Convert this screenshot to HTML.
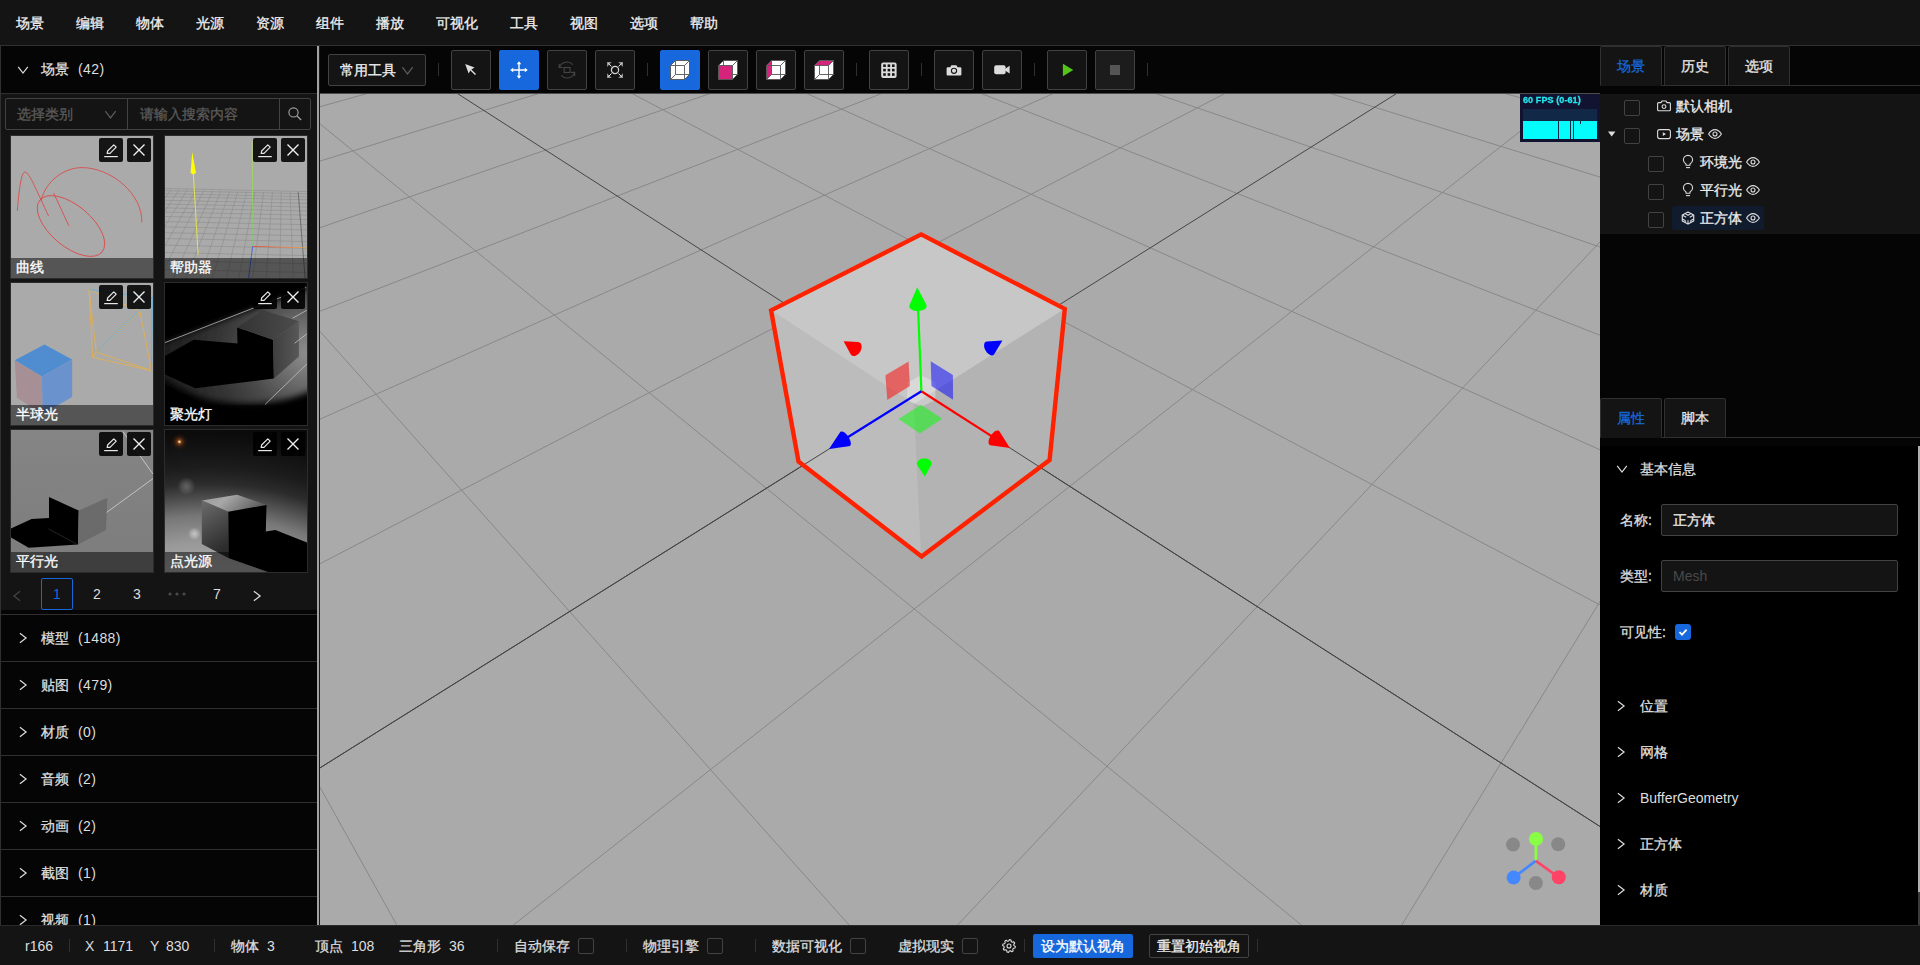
<!DOCTYPE html>
<html lang="zh"><head><meta charset="utf-8"><title>Editor</title><style>
*{box-sizing:border-box;margin:0;padding:0}
html,body{width:1920px;height:965px;overflow:hidden;background:#141414;font-family:"Liberation Sans",sans-serif;font-size:14px;color:#dcdcdc;line-height:1;-webkit-text-stroke-width:.3px}
div,span{position:absolute;white-space:nowrap}
svg{position:absolute;display:block;overflow:visible}
.t{line-height:20px;height:20px;font-size:14px;color:#dedede}
.mi{top:13px;line-height:20px;color:#f0f0f0}
.hb{left:1px;width:316px;height:46px;background:#050505;border-top:1px solid #303030}
.tb{top:50px;width:40px;height:40px;background:#141414;border:1px solid #424242;border-radius:2px}
.tb.on{background:#1668dc;border-color:#1668dc}
.sep{width:1px;background:#303030}
.th{width:142px;height:142px;overflow:hidden;background:#aaa;outline:1px solid #2c2c2c}
.th .lb{left:0;top:122px;width:142px;height:20px;background:rgba(0,0,0,.5)}
.th .lb b{position:absolute;left:5px;top:-1px;line-height:20px;font-size:14px;font-weight:normal;color:#fff}
.ib{top:2px;width:24px;height:24px;background:rgba(0,0,0,.88);border-radius:2px}
.pg{top:578px;width:32px;height:32px;line-height:32px;text-align:center;font-size:14px;color:#dedede}
.cb{width:16px;height:16px;border:1px solid #424242;border-radius:2px;background:#141414}
.tab{width:62px;height:40px;background:#141414;border:1px solid #303030;border-radius:2px 2px 0 0;text-align:center;line-height:38px;font-size:14px;color:#e6e6e6}
.tab.on{color:#1668dc;border-bottom-color:#141414}
.inp{left:1661px;width:237px;height:32px;background:#141414;border:1px solid #424242;border-radius:2px}
.inp span{left:11px;top:5px;line-height:20px}
.n{-webkit-text-stroke-width:0}
.st{top:936px;line-height:20px;font-size:14px;color:#dedede}
</style></head><body>
<div style="left:0;top:0;width:1920px;height:46px;background:#141414;border-bottom:1px solid #303030">
<span class="mi" style="left:16px">场景</span>
<span class="mi" style="left:76px">编辑</span>
<span class="mi" style="left:136px">物体</span>
<span class="mi" style="left:196px">光源</span>
<span class="mi" style="left:256px">资源</span>
<span class="mi" style="left:316px">组件</span>
<span class="mi" style="left:376px">播放</span>
<span class="mi" style="left:436px">可视化</span>
<span class="mi" style="left:510px">工具</span>
<span class="mi" style="left:570px">视图</span>
<span class="mi" style="left:630px">选项</span>
<span class="mi" style="left:690px">帮助</span>
</div>
<div style="left:0;top:46px;width:320px;height:879px;background:#050505;overflow:hidden">
<div style="left:0;top:0;width:1px;height:879px;background:#303030"></div>
<div style="left:317px;top:0;width:2px;height:879px;background:#a2a2a2"></div>
<div style="left:319px;top:0;width:1px;height:879px;background:#1a1a1a"></div>
<div class="hb" style="top:0;border-top:none"><svg style="left:16px;top:18px" width="12" height="12" viewBox="0 0 12 12"><path d="M1.2 2.9L6 9.1L10.8 2.9" fill="none" stroke="#dcdcdc" stroke-width="1.2"/></svg><span class="t" style="left:40px;top:13px">场景</span><span class="t n" style="left:77px;top:13px;letter-spacing:.4px">(42)</span></div>
<div style="left:1px;top:47px;width:316px;height:517px;background:#141414;border-top:1px solid #303030">
<div style="left:4px;top:4px;width:306px;height:32px;border:1px solid #424242;border-radius:2px;background:#141414">
<span style="left:11px;top:5px;line-height:20px;color:#5a5a5a">选择类别</span><svg style="left:98px;top:9px" width="13" height="13" viewBox="0 0 12 12"><path d="M1.2 2.9L6 9.1L10.8 2.9" fill="none" stroke="#5a5a5a" stroke-width="1.2"/></svg>
<div style="left:121px;top:0;width:1px;height:30px;background:#424242"></div>
<span style="left:134px;top:5px;line-height:20px;color:#5a5a5a">请输入搜索内容</span>
<div style="left:273px;top:0;width:1px;height:30px;background:#424242"></div>
<svg style="left:281px;top:7px" width="16" height="16" viewBox="0 0 16 16"><circle cx="6.5" cy="6.4" r="4.6" fill="none" stroke="#a0a0a0" stroke-width="1.15"/><path d="M9.8 9.8L14.2 14" stroke="#a0a0a0" stroke-width="1.3"/></svg>
</div>
<div class="th" style="left:10px;top:42px">
<svg style="left:0;top:0" width="142" height="142" viewBox="0 0 142 142"><rect width="142" height="142" fill="#aaa"/><g fill="none" stroke="#e23c3c" stroke-width="0.75"><path d="M6.3 74.9C7.6 60 9.6 36 14 36C18.4 36 26.5 57 37.6 80"/><path d="M30 64.8C35 44 54 31.6 71 31.6C100 31.6 132 58 130.8 86.6"/><ellipse cx="60" cy="90" rx="40.5" ry="20.5" transform="rotate(40 60 90)"/><path d="M42.6 57L57.8 89.6"/></g></svg>
<div class="lb" style="background:rgba(0,0,0,.5)"><b>曲线</b></div>
<div class="ib" style="left:88px;"><svg style="left:4px;top:4px" width="16" height="16" viewBox="0 0 16 16"><path d="M4.2 11.4L4.6 9L10.8 2.8L13.2 5.2L7 11.4Z" fill="none" stroke="#e8e8e8" stroke-width="1.2" stroke-linejoin="round"/><path d="M1.2 14.6H14.8" stroke="#e8e8e8" stroke-width="1.2"/></svg></div>
<div class="ib" style="left:116px;"><svg style="left:5px;top:5px" width="14" height="14" viewBox="0 0 14 14"><path d="M1.5 1.5L12.5 12.5M12.5 1.5L1.5 12.5" stroke="#f0f0f0" stroke-width="1.4"/></svg></div>
</div>
<div class="th" style="left:164px;top:42px">
<svg style="left:0;top:0" width="142" height="142" viewBox="0 0 142 142"><rect width="142" height="142" fill="#aaa"/><g stroke="#8a8a8a" stroke-width="0.55"><line x1="0" y1="52.5" x2="142" y2="55.6"/><line x1="0" y1="54.7" x2="142" y2="57.8"/><line x1="0" y1="57.7" x2="142" y2="60.8"/><line x1="0" y1="60.6" x2="142" y2="63.7"/><line x1="0" y1="64.3" x2="142" y2="67.4"/><line x1="0" y1="68.0" x2="142" y2="71.1"/><line x1="0" y1="71.9" x2="142" y2="75.0"/><line x1="0" y1="76.1" x2="142" y2="79.2"/><line x1="0" y1="80.5" x2="142" y2="83.6"/><line x1="0" y1="85.6" x2="142" y2="88.7"/><line x1="0" y1="90.8" x2="142" y2="93.9"/><line x1="0" y1="96.7" x2="142" y2="99.8"/><line x1="0" y1="102.5" x2="142" y2="105.6"/><line x1="0" y1="109.2" x2="142" y2="112.3"/><line x1="0" y1="116.5" x2="142" y2="119.6"/><line x1="0" y1="124.6" x2="142" y2="127.7"/><line x1="0" y1="133.4" x2="142" y2="136.5"/><line x1="0" y1="143.7" x2="142" y2="146.8"/><line x1="-35.3" y1="52.9" x2="-131.4" y2="150"/><line x1="-26.5" y1="53.1" x2="-116.8" y2="150"/><line x1="-18.4" y1="53.3" x2="-103.4" y2="150"/><line x1="-10.3" y1="53.5" x2="-90.1" y2="150"/><line x1="-2.2" y1="53.7" x2="-76.8" y2="150"/><line x1="5.9" y1="53.8" x2="-63.5" y2="150"/><line x1="14.0" y1="54.0" x2="-50.2" y2="150"/><line x1="22.1" y1="54.2" x2="-37.0" y2="150"/><line x1="30.9" y1="54.4" x2="-22.6" y2="150"/><line x1="39.0" y1="54.5" x2="-9.5" y2="150"/><line x1="47.8" y1="54.7" x2="4.8" y2="150"/><line x1="55.9" y1="54.9" x2="17.9" y2="150"/><line x1="64.7" y1="55.1" x2="32.2" y2="150"/><line x1="72.8" y1="55.3" x2="45.2" y2="150"/><line x1="81.7" y1="55.5" x2="59.4" y2="150"/><line x1="89.8" y1="55.6" x2="72.4" y2="150"/><line x1="98.6" y1="55.8" x2="86.5" y2="150"/><line x1="107.4" y1="56.0" x2="100.6" y2="150"/><line x1="116.2" y1="56.2" x2="114.6" y2="150"/><line x1="125.1" y1="56.4" x2="128.6" y2="150"/></g><line x1="133.2" y1="56.2" x2="140.1" y2="142.0" stroke="#5e5e5e" stroke-width="0.8" stroke-opacity="1"/><line x1="33.1" y1="118.5" x2="28.3" y2="36.8" stroke="#eaea4a" stroke-width="0.9" stroke-opacity="1"/><polygon points="27.2,15.9 25.6,37.1 28.3,38.6 31.0,37.1" fill="#ffff00"/><defs><linearGradient id="hg" x1="0" y1="0" x2="0" y2="1"><stop offset="0" stop-color="#c2d86a"/><stop offset="1" stop-color="#5ee044"/></linearGradient><linearGradient id="hr" x1="0" y1="0" x2="1" y2="0"><stop offset="0" stop-color="#f0402a"/><stop offset="1" stop-color="#f0a848"/></linearGradient></defs><path d="M86.7 4.4L87.7 110.4L88.5 110.4L87.5 4.4Z" fill="url(#hg)"/><path d="M87.6 110L142 111.4V112.2L87.6 110.8Z" fill="url(#hr)"/><line x1="87.6" y1="110.7" x2="83.6" y2="142.0" stroke="#3a62e0" stroke-width="0.9" stroke-opacity="1"/></svg>
<div class="lb" style="background:rgba(0,0,0,.5)"><b>帮助器</b></div>
<div class="ib" style="left:88px;"><svg style="left:4px;top:4px" width="16" height="16" viewBox="0 0 16 16"><path d="M4.2 11.4L4.6 9L10.8 2.8L13.2 5.2L7 11.4Z" fill="none" stroke="#e8e8e8" stroke-width="1.2" stroke-linejoin="round"/><path d="M1.2 14.6H14.8" stroke="#e8e8e8" stroke-width="1.2"/></svg></div>
<div class="ib" style="left:116px;"><svg style="left:5px;top:5px" width="14" height="14" viewBox="0 0 14 14"><path d="M1.5 1.5L12.5 12.5M12.5 1.5L1.5 12.5" stroke="#f0f0f0" stroke-width="1.4"/></svg></div>
</div>
<div class="th" style="left:10px;top:189px">
<svg style="left:0;top:0" width="142" height="142" viewBox="0 0 142 142"><rect width="142" height="142" fill="#aaa"/><polygon points="33.5,61.5 61.1,76.5 30.9,93.4 3.7,77.3" fill="#4f8dd0"/><polygon points="3.7,77.3 30.9,93.4 31.6,131.0 5.9,114.8" fill="#a79095"/><polygon points="30.9,93.4 61.1,76.5 61.1,114.0 31.6,131.0" fill="#6a93cd"/><line x1="78.0" y1="6.6" x2="81.7" y2="74.3" stroke="#eeb040" stroke-width="0.75" stroke-opacity="1"/><line x1="78.0" y1="6.6" x2="85.3" y2="69.2" stroke="#eeb040" stroke-width="0.75" stroke-opacity="1"/><line x1="78.0" y1="6.6" x2="128.8" y2="28.0" stroke="#eeb040" stroke-width="0.75" stroke-opacity="1"/><line x1="128.8" y1="28.0" x2="85.3" y2="69.2" stroke="#eeb040" stroke-width="0.75" stroke-opacity="1"/><line x1="128.8" y1="28.0" x2="140.5" y2="87.6" stroke="#eeb040" stroke-width="0.75" stroke-opacity="1"/><line x1="85.3" y1="69.2" x2="140.5" y2="87.6" stroke="#eeb040" stroke-width="0.75" stroke-opacity="1"/><line x1="81.7" y1="74.3" x2="140.5" y2="87.6" stroke="#eeb040" stroke-width="0.75" stroke-opacity="1"/><line x1="85.3" y1="69.2" x2="81.7" y2="74.3" stroke="#eeb040" stroke-width="0.75" stroke-opacity="1"/><line x1="78.0" y1="6.6" x2="141.3" y2="14.7" stroke="#52b2ea" stroke-width="0.75" stroke-opacity="1"/><line x1="141.3" y1="14.7" x2="85.3" y2="69.2" stroke="#52b2ea" stroke-width="0.75" stroke-opacity="1"/><line x1="141.3" y1="14.7" x2="140.5" y2="87.6" stroke="#52b2ea" stroke-width="0.75" stroke-opacity="1"/></svg>
<div class="lb" style="background:rgba(0,0,0,.5)"><b>半球光</b></div>
<div class="ib" style="left:88px;"><svg style="left:4px;top:4px" width="16" height="16" viewBox="0 0 16 16"><path d="M4.2 11.4L4.6 9L10.8 2.8L13.2 5.2L7 11.4Z" fill="none" stroke="#e8e8e8" stroke-width="1.2" stroke-linejoin="round"/><path d="M1.2 14.6H14.8" stroke="#e8e8e8" stroke-width="1.2"/></svg></div>
<div class="ib" style="left:116px;"><svg style="left:5px;top:5px" width="14" height="14" viewBox="0 0 14 14"><path d="M1.5 1.5L12.5 12.5M12.5 1.5L1.5 12.5" stroke="#f0f0f0" stroke-width="1.4"/></svg></div>
</div>
<div class="th" style="left:164px;top:189px">
<svg style="left:0;top:0" width="142" height="142" viewBox="0 0 142 142"><defs><radialGradient id="sg" gradientUnits="userSpaceOnUse" cx="141" cy="70" r="150"><stop offset="0" stop-color="#8e8e8e"/><stop offset="0.2" stop-color="#6c6c6c"/><stop offset="0.4" stop-color="#494949"/><stop offset="0.6" stop-color="#343434"/><stop offset="0.8" stop-color="#262626"/><stop offset="1" stop-color="#1a1a1a"/></radialGradient><filter id="sb" x="-10%" y="-10%" width="120%" height="120%"><feGaussianBlur stdDeviation="3"/></filter><linearGradient id="st" x1="0" y1="0" x2="1" y2="0"><stop offset="0" stop-color="#333"/><stop offset="1" stop-color="#4c4c4c"/></linearGradient><linearGradient id="sr" x1="0" y1="0" x2="1" y2="0"><stop offset="0" stop-color="#3e3e3e"/><stop offset="1" stop-color="#585858"/></linearGradient></defs><rect width="142" height="142" fill="#000"/><path d="M-6 61.5L91 25.5L150 3V106Q103 128 44 117Q15 108 -6 93Z" fill="url(#sg)" filter="url(#sb)"/><polygon points="0.0,73.1 28.7,56.7 72.5,60.6 72.1,44.4 108.2,56.7 108.9,95.6 30.2,105.2 0.0,91.5" fill="#000"/><polygon points="72.1,44.4 97.9,27.2 133.9,38.3 108.2,56.7" fill="url(#st)"/><polygon points="108.2,56.7 133.9,38.3 133.9,73.6 108.9,95.6" fill="url(#sr)"/><line x1="0.0" y1="59.6" x2="141.3" y2="4.4" stroke="#cfcfcf" stroke-width="0.7" stroke-opacity="1"/><line x1="127.3" y1="35.3" x2="142.0" y2="27.2" stroke="#cfcfcf" stroke-width="0.7" stroke-opacity="1"/><line x1="129.5" y1="60.3" x2="142.0" y2="50.8" stroke="#cfcfcf" stroke-width="0.7" stroke-opacity="1"/><line x1="100.1" y1="121.4" x2="142.0" y2="80.9" stroke="#cfcfcf" stroke-width="0.7" stroke-opacity="1"/></svg>
<div class="lb" style="background:rgba(0,0,0,.5)"><b>聚光灯</b></div>
<div class="ib" style="left:88px;"><svg style="left:4px;top:4px" width="16" height="16" viewBox="0 0 16 16"><path d="M4.2 11.4L4.6 9L10.8 2.8L13.2 5.2L7 11.4Z" fill="none" stroke="#e8e8e8" stroke-width="1.2" stroke-linejoin="round"/><path d="M1.2 14.6H14.8" stroke="#e8e8e8" stroke-width="1.2"/></svg></div>
<div class="ib" style="left:116px;"><svg style="left:5px;top:5px" width="14" height="14" viewBox="0 0 14 14"><path d="M1.5 1.5L12.5 12.5M12.5 1.5L1.5 12.5" stroke="#f0f0f0" stroke-width="1.4"/></svg></div>
</div>
<div class="th" style="left:10px;top:336px">
<svg style="left:0;top:0" width="142" height="142" viewBox="0 0 142 142"><defs><linearGradient id="dg" x1="0" y1="0" x2="0" y2="1"><stop offset="0" stop-color="#858585"/><stop offset="1" stop-color="#7c7c7c"/></linearGradient></defs><rect width="142" height="142" fill="url(#dg)"/><polygon points="38.0,67.0 66.2,52.2 96.4,67.7 67.7,80.6" fill="#828282"/><polygon points="38.0,67.0 67.7,80.6 67.0,114.5 17.7,117.7 0.0,107.4 0.0,98.6 20.6,89.0 38.0,88.0" fill="#000"/><polygon points="67.7,80.6 96.4,67.7 94.9,100.1 67.0,114.5" fill="#6b6b6b"/><line x1="37.5" y1="98.9" x2="65.5" y2="114.0" stroke="#3a3a3a" stroke-width="0.6" stroke-opacity="1"/><line x1="95.6" y1="82.4" x2="142.0" y2="48.6" stroke="#e0e0e0" stroke-width="0.7" stroke-opacity="1"/><line x1="111.8" y1="1.5" x2="142.0" y2="44.1" stroke="#e0e0e0" stroke-width="0.7" stroke-opacity="1"/></svg>
<div class="lb" style="background:rgba(0,0,0,.5)"><b>平行光</b></div>
<div class="ib" style="left:88px;"><svg style="left:4px;top:4px" width="16" height="16" viewBox="0 0 16 16"><path d="M4.2 11.4L4.6 9L10.8 2.8L13.2 5.2L7 11.4Z" fill="none" stroke="#e8e8e8" stroke-width="1.2" stroke-linejoin="round"/><path d="M1.2 14.6H14.8" stroke="#e8e8e8" stroke-width="1.2"/></svg></div>
<div class="ib" style="left:116px;"><svg style="left:5px;top:5px" width="14" height="14" viewBox="0 0 14 14"><path d="M1.5 1.5L12.5 12.5M12.5 1.5L1.5 12.5" stroke="#f0f0f0" stroke-width="1.4"/></svg></div>
</div>
<div class="th" style="left:164px;top:336px">
<svg style="left:0;top:0" width="142" height="142" viewBox="0 0 142 142"><defs><radialGradient id="pg" cx="0.3" cy="2.5" r="2.6"><stop offset="0.6" stop-color="#a6a6a6"/><stop offset="0.656" stop-color="#999"/><stop offset="0.729" stop-color="#777"/><stop offset="0.768" stop-color="#555"/><stop offset="0.816" stop-color="#2c2c2c"/><stop offset="0.86" stop-color="#1c1c1c"/><stop offset="0.95" stop-color="#0c0c0c"/><stop offset="1" stop-color="#080808"/></radialGradient><radialGradient id="pf"><stop offset="0" stop-color="#fff0d4"/><stop offset="0.1" stop-color="#f4b878"/><stop offset="0.22" stop-color="#8a4a22" stop-opacity="0.85"/><stop offset="0.6" stop-color="#44220e" stop-opacity="0.5"/><stop offset="1" stop-color="#301400" stop-opacity="0"/></radialGradient><radialGradient id="pw"><stop offset="0" stop-color="#fff" stop-opacity="0.55"/><stop offset="0.5" stop-color="#fff" stop-opacity="0.3"/><stop offset="1" stop-color="#fff" stop-opacity="0"/></radialGradient><linearGradient id="pt" x1="0" y1="0" x2="1" y2="0.3"><stop offset="0" stop-color="#9a9a9a"/><stop offset="0.4" stop-color="#a8a8a8"/><stop offset="1" stop-color="#606060"/></linearGradient><linearGradient id="pl" x1="0" y1="0" x2="0.3" y2="1"><stop offset="0" stop-color="#6c6c6c"/><stop offset="1" stop-color="#2c2c2c"/></linearGradient></defs><rect width="142" height="142" fill="url(#pg)"/><circle cx="14.4" cy="11.8" r="8.5" fill="url(#pf)"/><circle cx="21.3" cy="56" r="9" fill="url(#pw)" opacity="0.45"/><circle cx="29.4" cy="103.7" r="6.5" fill="url(#pw)" opacity="0.9"/><polygon points="36.8,70.6 72.1,64.7 101.5,75.0 63.3,81.7" fill="url(#pt)"/><polygon points="36.8,70.6 63.3,81.7 63.3,128.0 36.8,114.0" fill="url(#pl)"/><polygon points="63.3,81.7 101.5,75.0 100.8,101.5 110.4,100.1 142.0,112.6 142.0,142.0 103.0,142.0 63.3,128.0" fill="#000"/></svg>
<div class="lb" style="background:rgba(0,0,0,.5)"><b>点光源</b></div>
<div class="ib" style="left:88px;"><svg style="left:4px;top:4px" width="16" height="16" viewBox="0 0 16 16"><path d="M4.2 11.4L4.6 9L10.8 2.8L13.2 5.2L7 11.4Z" fill="none" stroke="#e8e8e8" stroke-width="1.2" stroke-linejoin="round"/><path d="M1.2 14.6H14.8" stroke="#e8e8e8" stroke-width="1.2"/></svg></div>
<div class="ib" style="left:116px;"><svg style="left:5px;top:5px" width="14" height="14" viewBox="0 0 14 14"><path d="M1.5 1.5L12.5 12.5M12.5 1.5L1.5 12.5" stroke="#f0f0f0" stroke-width="1.4"/></svg></div>
</div>
</div>
<svg style="left:11px;top:544px" width="12" height="12" viewBox="0 0 12 12"><path d="M9.1 1.2L2.9 6L9.1 10.8" fill="none" stroke="#434343" stroke-width="1.3"/></svg>
<div class="pg n" style="left:41px;top:532px;border:1px solid #1668dc;border-radius:2px;color:#1668dc;line-height:30px;background:#141414">1</div>
<div class="pg n" style="left:81px;top:532px">2</div>
<div class="pg n" style="left:121px;top:532px">3</div>
<div class="pg n" style="left:201px;top:532px">7</div>
<svg style="left:167px;top:546px" width="20" height="4"><circle cx="3" cy="2" r="1.6" fill="#4a4a4a"/><circle cx="10" cy="2" r="1.6" fill="#4a4a4a"/><circle cx="17" cy="2" r="1.6" fill="#4a4a4a"/></svg>
<svg style="left:251px;top:544px" width="12" height="12" viewBox="0 0 12 12"><path d="M2.9 1.2L9.1 6L2.9 10.8" fill="none" stroke="#dcdcdc" stroke-width="1.3"/></svg>
<div class="hb" style="top:568px;height:47px"><svg style="left:16px;top:17px" width="12" height="12" viewBox="0 0 12 12"><path d="M2.9 1.2L9.1 6L2.9 10.8" fill="none" stroke="#dcdcdc" stroke-width="1.2"/></svg><span class="t" style="left:40px;top:13px">模型</span><span class="t n" style="left:77px;top:13px;letter-spacing:.4px">(1488)</span></div>
<div class="hb" style="top:615px;height:47px"><svg style="left:16px;top:17px" width="12" height="12" viewBox="0 0 12 12"><path d="M2.9 1.2L9.1 6L2.9 10.8" fill="none" stroke="#dcdcdc" stroke-width="1.2"/></svg><span class="t" style="left:40px;top:13px">贴图</span><span class="t n" style="left:77px;top:13px;letter-spacing:.4px">(479)</span></div>
<div class="hb" style="top:662px;height:47px"><svg style="left:16px;top:17px" width="12" height="12" viewBox="0 0 12 12"><path d="M2.9 1.2L9.1 6L2.9 10.8" fill="none" stroke="#dcdcdc" stroke-width="1.2"/></svg><span class="t" style="left:40px;top:13px">材质</span><span class="t n" style="left:77px;top:13px;letter-spacing:.4px">(0)</span></div>
<div class="hb" style="top:709px;height:47px"><svg style="left:16px;top:17px" width="12" height="12" viewBox="0 0 12 12"><path d="M2.9 1.2L9.1 6L2.9 10.8" fill="none" stroke="#dcdcdc" stroke-width="1.2"/></svg><span class="t" style="left:40px;top:13px">音频</span><span class="t n" style="left:77px;top:13px;letter-spacing:.4px">(2)</span></div>
<div class="hb" style="top:756px;height:47px"><svg style="left:16px;top:17px" width="12" height="12" viewBox="0 0 12 12"><path d="M2.9 1.2L9.1 6L2.9 10.8" fill="none" stroke="#dcdcdc" stroke-width="1.2"/></svg><span class="t" style="left:40px;top:13px">动画</span><span class="t n" style="left:77px;top:13px;letter-spacing:.4px">(2)</span></div>
<div class="hb" style="top:803px;height:47px"><svg style="left:16px;top:17px" width="12" height="12" viewBox="0 0 12 12"><path d="M2.9 1.2L9.1 6L2.9 10.8" fill="none" stroke="#dcdcdc" stroke-width="1.2"/></svg><span class="t" style="left:40px;top:13px">截图</span><span class="t n" style="left:77px;top:13px;letter-spacing:.4px">(1)</span></div>
<div class="hb" style="top:850px;height:47px"><svg style="left:16px;top:17px" width="12" height="12" viewBox="0 0 12 12"><path d="M2.9 1.2L9.1 6L2.9 10.8" fill="none" stroke="#dcdcdc" stroke-width="1.2"/></svg><span class="t" style="left:40px;top:13px">视频</span><span class="t n" style="left:77px;top:13px;letter-spacing:.4px">(1)</span></div>
</div>
<div style="left:320px;top:46px;width:1280px;height:48px;background:#050505;border-bottom:1px solid #4c4c4c"></div>
<div style="left:328px;top:54px;width:98px;height:32px;background:#141414;border:1px solid #424242;border-radius:2px"><span style="left:11px;top:5px;line-height:20px;color:#f0f0f0">常用工具</span><svg style="left:72px;top:9px" width="13" height="13" viewBox="0 0 12 12"><path d="M1.2 2.9L6 9.1L10.8 2.9" fill="none" stroke="#5a5a5a" stroke-width="1.2"/></svg></div>
<div class="sep" style="left:438px;top:63px;height:13px"></div>
<div class="sep" style="left:647px;top:63px;height:13px"></div>
<div class="sep" style="left:856px;top:63px;height:13px"></div>
<div class="sep" style="left:921px;top:63px;height:13px"></div>
<div class="sep" style="left:1034px;top:63px;height:13px"></div>
<div class="sep" style="left:1147px;top:63px;height:13px"></div>
<div class="tb " style="left:451px"><svg style="left:11px;top:11px" width="16" height="16" viewBox="0 0 16 16"><path d="M2.2 2L11.6 5.6L8.4 7.4L13 12L12 13L7.4 8.4L5.6 11.6Z" fill="#dcdcdc"/></svg></div>
<div class="tb on" style="left:499px"><svg style="left:9px;top:9px" width="20" height="20" viewBox="0 0 20 20"><path d="M10 1.2L12.3 4.2H10.7V9.3H15.8V7.7L18.8 10L15.8 12.3V10.7H10.7V15.8H12.3L10 18.8L7.7 15.8H9.3V10.7H4.2V12.3L1.2 10L4.2 7.7V9.3H9.3V4.2H7.7Z" fill="#fff"/></svg></div>
<div class="tb " style="left:547px"><svg style="left:10px;top:10px" width="18" height="18" viewBox="0 0 18 18"><rect x="6.1" y="6.5" width="5.9" height="5" fill="none" stroke="#454545" stroke-width="1.1"/><path d="M1.3 6.5A7.9 7.9 0 0 1 14.7 3.6" fill="none" stroke="#454545" stroke-width="1.1"/><path d="M1.2 3V6.5H4.7" fill="none" stroke="#454545" stroke-width="1.1"/><path d="M16.7 11.4A7.9 7.9 0 0 1 3.2 14.3" fill="none" stroke="#454545" stroke-width="1.1"/><path d="M13.2 11.4H16.7V14.9" fill="none" stroke="#454545" stroke-width="1.1"/></svg></div>
<div class="tb " style="left:595px"><svg style="left:10px;top:10px" width="18" height="18" viewBox="0 0 18 18"><circle cx="9" cy="9" r="3.6" fill="none" stroke="#d4d4d4" stroke-width="1.25"/><path d="M1 1.1H5.8L1 5.9ZM17 1.1V5.9L12.2 1.1ZM1 17V12.2L5.8 17ZM17 17H12.2L17 12.2Z" fill="#8e8e8e"/><path d="M2.2 2.3L5.5 5.6M15.8 2.3L12.5 5.6M2.2 15.8L5.5 12.5M15.8 15.8L12.5 12.5" stroke="#f0f0f0" stroke-width="1"/></svg></div>
<div class="tb on" style="left:660px"><svg style="left:9px;top:9px" width="20" height="20" viewBox="0 0 20 20"><path d="M0.5 5.5L5.5 0.5H19.5V14.5L14.5 19.5H0.5Z" fill="#fff"/><path d="M0.5 5.5H14.5V19.5H0.5ZM0.5 5.5L5.5 0.5H19.5V14.5L14.5 19.5M14.5 5.5L19.5 0.5M5.5 0.5V14.5H19.5M5.5 14.5L0.5 19.5" fill="none" stroke="#555" stroke-width="0.9"/></svg></div>
<div class="tb " style="left:708px"><svg style="left:9px;top:9px" width="20" height="20" viewBox="0 0 20 20"><path d="M0.5 5.5L5.5 0.5H19.5V14.5L14.5 19.5H0.5Z" fill="#fff"/><rect x="0.5" y="5.5" width="14" height="14" fill="#d6247c"/><path d="M0.5 5.5H14.5V19.5H0.5ZM0.5 5.5L5.5 0.5H19.5V14.5L14.5 19.5M14.5 5.5L19.5 0.5M5.5 0.5V5.5M14.5 14.5H19.5" fill="none" stroke="#555" stroke-width="0.9"/></svg></div>
<div class="tb " style="left:756px"><svg style="left:9px;top:9px" width="20" height="20" viewBox="0 0 20 20"><path d="M0.5 5.5L5.5 0.5H19.5V14.5L14.5 19.5H0.5Z" fill="#fff"/><path d="M0.5 5.5L5.5 0.5V14.5L0.5 19.5Z" fill="#d6247c"/><path d="M0.5 5.5H14.5V19.5H0.5ZM0.5 5.5L5.5 0.5H19.5V14.5L14.5 19.5M14.5 5.5L19.5 0.5M5.5 0.5V14.5H19.5M5.5 14.5L0.5 19.5" fill="none" stroke="#555" stroke-width="0.9"/></svg></div>
<div class="tb " style="left:804px"><svg style="left:9px;top:9px" width="20" height="20" viewBox="0 0 20 20"><path d="M0.5 5.5L5.5 0.5H19.5V14.5L14.5 19.5H0.5Z" fill="#fff"/><path d="M0.5 5.5L5.5 0.5H19.5L14.5 5.5Z" fill="#d6247c"/><path d="M0.5 5.5H14.5V19.5H0.5ZM0.5 5.5L5.5 0.5H19.5V14.5L14.5 19.5M14.5 5.5L19.5 0.5M5.5 0.5V14.5H19.5M5.5 14.5L0.5 19.5" fill="none" stroke="#555" stroke-width="0.9"/></svg></div>
<div class="tb " style="left:869px"><svg style="left:11px;top:11px" width="16" height="16" viewBox="0 0 16 16"><rect x="0.2" y="0.4" width="15.4" height="15.6" rx="2" fill="#dcdcdc"/><rect x="2.2" y="2.4" width="2.6" height="2.6" fill="#141414"/><rect x="2.2" y="6.800000000000001" width="2.6" height="2.6" fill="#141414"/><rect x="2.2" y="11.200000000000001" width="2.6" height="2.6" fill="#141414"/><rect x="6.6000000000000005" y="2.4" width="2.6" height="2.6" fill="#141414"/><rect x="6.6000000000000005" y="6.800000000000001" width="2.6" height="2.6" fill="#141414"/><rect x="6.6000000000000005" y="11.200000000000001" width="2.6" height="2.6" fill="#141414"/><rect x="11.0" y="2.4" width="2.6" height="2.6" fill="#141414"/><rect x="11.0" y="6.800000000000001" width="2.6" height="2.6" fill="#141414"/><rect x="11.0" y="11.200000000000001" width="2.6" height="2.6" fill="#141414"/></svg></div>
<div class="tb " style="left:934px"><svg style="left:11px;top:13px" width="16" height="12" viewBox="0 0 16 12"><path d="M1.6 3.2H4.2L5.4 1.2H10.4L11.6 3.2H14.2Q15.4 3.2 15.4 4.4V10.2Q15.4 11.4 14.2 11.4H1.6Q0.6 11.4 0.6 10.2V4.4Q0.6 3.2 1.6 3.2Z" fill="#dcdcdc"/><circle cx="8" cy="6.8" r="2.6" fill="#dcdcdc" stroke="#141414" stroke-width="1.1"/></svg></div>
<div class="tb " style="left:982px"><svg style="left:11px;top:14px" width="16" height="10" viewBox="0 0 16 10"><rect x="0.2" y="0.2" width="11.4" height="9" rx="2" fill="#dcdcdc"/><path d="M11 4L15.6 0.8V8.6L11 5.6Z" fill="#dcdcdc"/></svg></div>
<div class="tb " style="left:1047px"><svg style="left:13px;top:12px" width="14" height="14" viewBox="0 0 14 14"><path d="M1.9 0.7L12.3 7L1.9 13.3Z" fill="#52c41a"/></svg></div>
<div class="tb dis" style="left:1095px;background:#1c1c1c"><svg style="left:14px;top:14px" width="10" height="10" viewBox="0 0 10 10"><rect width="10" height="10" fill="#555"/></svg></div>
<div style="left:320px;top:94px;width:1280px;height:831px;background:#aaaaaa;overflow:hidden">
<svg style="left:0;top:0" width="1280" height="831" viewBox="320 94 1280 831">
<g stroke-linecap="butt">
<line x1="939.0" y1="-145.4" x2="-422.8" y2="153.9" stroke="#888" stroke-width="1"/>
<line x1="939.0" y1="-145.4" x2="2256.1" y2="143.4" stroke="#888" stroke-width="1"/>
<line x1="987.4" y1="-134.8" x2="-427.9" y2="200.5" stroke="#888" stroke-width="1"/>
<line x1="889.8" y1="-134.6" x2="2258.1" y2="189.1" stroke="#888" stroke-width="1"/>
<line x1="1039.6" y1="-123.3" x2="-434.0" y2="255.1" stroke="#888" stroke-width="1"/>
<line x1="836.8" y1="-122.9" x2="2260.4" y2="242.7" stroke="#888" stroke-width="1"/>
<line x1="1096.0" y1="-110.9" x2="-441.2" y2="320.2" stroke="#888" stroke-width="1"/>
<line x1="779.3" y1="-110.3" x2="2263.2" y2="306.4" stroke="#888" stroke-width="1"/>
<line x1="1157.1" y1="-97.5" x2="-449.9" y2="398.9" stroke="#888" stroke-width="1"/>
<line x1="717.0" y1="-96.6" x2="2266.5" y2="383.6" stroke="#888" stroke-width="1"/>
<line x1="1223.6" y1="-83.0" x2="-460.6" y2="496.0" stroke="#888" stroke-width="1"/>
<line x1="649.1" y1="-81.6" x2="2270.7" y2="478.8" stroke="#888" stroke-width="1"/>
<line x1="1296.2" y1="-67.1" x2="-474.2" y2="619.0" stroke="#888" stroke-width="1"/>
<line x1="574.7" y1="-65.3" x2="2275.9" y2="599.2" stroke="#888" stroke-width="1"/>
<line x1="1375.8" y1="-49.6" x2="-491.9" y2="779.6" stroke="#888" stroke-width="1"/>
<line x1="493.1" y1="-47.4" x2="2282.8" y2="756.5" stroke="#888" stroke-width="1"/>
<line x1="1463.4" y1="-30.4" x2="-516.1" y2="998.2" stroke="#888" stroke-width="1"/>
<line x1="402.9" y1="-27.6" x2="2292.1" y2="970.6" stroke="#888" stroke-width="1"/>
<line x1="1668.2" y1="14.5" x2="-605.5" y2="1807.2" stroke="#888" stroke-width="1"/>
<line x1="191.4" y1="18.9" x2="2326.5" y2="1761.8" stroke="#888" stroke-width="1"/>
<line x1="1788.9" y1="41.0" x2="-703.2" y2="2691.3" stroke="#888" stroke-width="1"/>
<line x1="66.1" y1="46.5" x2="2364.0" y2="2624.9" stroke="#888" stroke-width="1"/>
<line x1="1924.9" y1="70.8" x2="-928.7" y2="4730.7" stroke="#888" stroke-width="1"/>
<line x1="-75.5" y1="77.6" x2="2450.2" y2="4609.7" stroke="#888" stroke-width="1"/>
<line x1="2079.3" y1="104.6" x2="-1637.2" y2="13171.3" stroke="#888" stroke-width="1"/>
<line x1="-237.0" y1="113.1" x2="2681.3" y2="13175.5" stroke="#888" stroke-width="1"/>
<line x1="2256.1" y1="143.4" x2="2822.6" y2="13175.7" stroke="#888" stroke-width="1"/>
<line x1="-422.8" y1="153.9" x2="-1861.5" y2="13171.1" stroke="#888" stroke-width="1"/>
<line x1="1560.4" y1="-9.1" x2="-550.9" y2="1313.4" stroke="#454545" stroke-width="1"/>
<line x1="302.9" y1="-5.6" x2="2305.5" y2="1279.1" stroke="#454545" stroke-width="1"/>
</g>
<polygon points="921.2,233.9 1065.3,308.7 914.2,404.3 770.6,310.2" fill="#c7c7c7" stroke="#c7c7c7" stroke-width="0.6"/>
<polygon points="770.6,310.2 914.2,404.3 921.6,557.0 798.1,461.8" fill="#bcbcbc" stroke="#bcbcbc" stroke-width="0.6"/>
<polygon points="1065.3,308.7 914.2,404.3 921.6,557.0 1050.0,460.3" fill="#b3b3b3" stroke="#b3b3b3" stroke-width="0.6"/>
<line x1="991.5" y1="436.1" x2="2305.5" y2="1279.1" stroke="#454545" stroke-width="1"/>
<line x1="848.2" y1="437.0" x2="-550.9" y2="1313.4" stroke="#454545" stroke-width="1"/>
<polygon points="921.2,234.4 1064.8,308.9 1049.6,460.0 921.6,556.4 798.5,461.5 771.1,310.4" fill="none" stroke="#ff2200" stroke-width="4.4" stroke-linejoin="miter"/>
<polygon points="906.8,400.3 907.7,382.4 920.7,375.3 935.6,382.2 935.3,400.1 922.0,406.5" fill="#fff" fill-opacity="0.3"/>
<polygon points="909.9,386.1 908.6,361.4 885.4,375.3 887.3,400.0" fill="#ff0000" fill-opacity="0.5"/>
<polygon points="931.5,386.0 953.1,399.7 952.9,374.9 930.7,361.3" fill="#0000ff" fill-opacity="0.5"/>
<polygon points="920.9,404.8 942.3,418.7 920.0,433.4 898.6,419.0" fill="#00ff00" fill-opacity="0.5"/>
<line x1="921.4" y1="391.2" x2="994.3" y2="437.9" stroke="#ff0000" stroke-width="2.2"/>
<line x1="921.4" y1="391.2" x2="918.0" y2="306.1" stroke="#00ff00" stroke-width="2.2"/>
<line x1="921.4" y1="391.2" x2="845.3" y2="438.8" stroke="#0000ff" stroke-width="2.2"/>
<polygon points="988.5,442.0 988.8,440.2 989.4,438.3 990.4,436.3 991.6,434.5 993.0,432.9 994.5,431.6 996.0,430.8 997.4,430.4 998.5,430.6 999.4,431.3 1009.9,447.9 990.1,445.2 989.2,444.6 988.7,443.5" fill="#ff0000"/>
<polygon points="843.6,341.3 858.2,342.1 859.5,342.5 860.5,343.2 861.2,344.4 861.6,345.9 861.6,347.6 861.1,349.4 860.4,351.2 859.3,352.9 858.0,354.2 856.5,355.3 855.0,355.9 853.6,356.1 852.3,355.8 851.2,355.1 850.5,353.9" fill="#ff0000"/>
<polygon points="909.3,306.1 909.7,304.8 917.2,287.2 926.4,304.8 926.6,306.0 926.3,307.3 925.4,308.5 924.0,309.5 922.2,310.3 920.0,310.8 917.8,311.0 915.5,310.9 913.4,310.4 911.7,309.6 910.3,308.6 909.5,307.4" fill="#00ff00"/>
<polygon points="916.9,463.5 917.2,462.2 918.0,461.0 919.2,459.9 920.7,459.1 922.5,458.6 924.4,458.4 926.3,458.6 928.0,459.1 929.5,459.9 930.7,460.9 931.4,462.1 931.6,463.4 931.4,464.7 924.8,476.6 917.8,466.1 917.1,464.8" fill="#00ff00"/>
<polygon points="829.0,449.0 840.1,432.3 840.8,431.6 841.8,431.4 843.1,431.7 844.5,432.5 845.9,433.7 847.3,435.3 848.6,437.2 849.6,439.1 850.4,441.1 850.8,442.8 850.8,444.3 850.4,445.4 849.7,446.1 848.7,446.2" fill="#0000ff"/>
<polygon points="984.1,345.3 984.3,343.8 984.9,342.6 985.8,341.8 987.0,341.5 1002.4,340.4 994.2,354.3 993.3,355.1 992.1,355.4 990.8,355.2 989.4,354.6 988.0,353.6 986.7,352.2 985.6,350.6 984.7,348.8 984.2,347.0" fill="#0000ff"/>
<g stroke-width="2.7" stroke-linecap="butt"><line x1="1535.8" y1="860.8" x2="1536" y2="843" stroke="#88ff44"/><line x1="1535.8" y1="860.8" x2="1554" y2="874" stroke="#ff4466"/><line x1="1535.8" y1="860.8" x2="1518" y2="874.3" stroke="#4488ff"/></g>
<circle cx="1513" cy="844.6" r="7" fill="#888"/>
<circle cx="1558.2" cy="844.2" r="7" fill="#888"/>
<circle cx="1535.9" cy="883" r="7" fill="#888"/>
<circle cx="1536" cy="838.9" r="7" fill="#88ff44"/>
<circle cx="1513.6" cy="877.6" r="7" fill="#4488ff"/>
<circle cx="1558.8" cy="877.2" r="7" fill="#ff4466"/>
</svg>
<div style="left:1200px;top:0;width:80px;height:48px;background:#0e0e2e;opacity:.97">
<span style="left:3px;top:1px;font-size:9px;font-weight:bold;line-height:11px;color:#1fe8f0;letter-spacing:0.1px">60 FPS (0-61)</span>
<div style="left:3px;top:15px;width:74px;height:30px;background:#0ff"></div>
<div style="left:3px;top:15px;width:74px;height:12px;background:#0e2444"></div>
<div style="left:38px;top:27px;width:1px;height:18px;background:#0e2444"></div>
<div style="left:50px;top:27px;width:1px;height:18px;background:#0e2444"></div>
<div style="left:53px;top:27px;width:1px;height:18px;background:#0e2444"></div>
<div style="left:60px;top:27px;width:1px;height:3px;background:#0e2444"></div>
</div>
</div>
<div style="left:1600px;top:46px;width:320px;height:879px;background:#050505"></div>
<div style="left:1600px;top:85px;width:320px;height:1px;background:#303030"></div>
<div class="tab on" style="left:1600px;top:46px">场景</div>
<div class="tab " style="left:1664px;top:46px">历史</div>
<div class="tab " style="left:1728px;top:46px">选项</div>
<div style="left:1600px;top:94px;width:320px;height:140px;background:#141414"></div>
<div class="cb" style="left:1624px;top:100px"></div>
<div style="left:1648px;top:94px;width:88px;height:24px;border-radius:3px">
<svg style="left:9px;top:5px" width="14" height="14" viewBox="0 0 14 14"><path d="M1.6 3.6H4L5 2H9L10 3.6H12.4Q13.4 3.6 13.4 4.6V10.8Q13.4 11.8 12.4 11.8H1.6Q0.6 11.8 0.6 10.8V4.6Q0.6 3.6 1.6 3.6Z" fill="none" stroke="#dcdcdc" stroke-width="1.1"/><circle cx="7" cy="7.6" r="1.9" fill="none" stroke="#dcdcdc" stroke-width="1.1"/></svg>
<span style="left:28px;top:2px;line-height:20px;color:#ededed">默认相机</span>
</div>
<svg style="left:1608px;top:131px" width="8" height="6"><path d="M0 0.5H7.4L3.7 5.6Z" fill="#dcdcdc"/></svg>
<div class="cb" style="left:1624px;top:128px"></div>
<div style="left:1648px;top:122px;width:78px;height:24px;border-radius:3px">
<svg style="left:9px;top:5px" width="14" height="14" viewBox="0 0 14 14"><rect x="0.6" y="2.6" width="12.8" height="9" rx="2" fill="none" stroke="#dcdcdc" stroke-width="1.1"/><path d="M5.8 5.2L9 7.1L5.8 9Z" fill="#dcdcdc"/></svg>
<span style="left:28px;top:2px;line-height:20px;color:#ededed">场景</span>
<svg style="left:60px;top:5px" width="14" height="14" viewBox="0 0 14 14"><path d="M0.6 7Q3.4 2.6 7 2.6Q10.6 2.6 13.4 7Q10.6 11.4 7 11.4Q3.4 11.4 0.6 7Z" fill="none" stroke="#dcdcdc" stroke-width="1.1"/><circle cx="7" cy="7" r="2" fill="none" stroke="#dcdcdc" stroke-width="1.1"/></svg>
</div>
<div class="cb" style="left:1648px;top:156px"></div>
<div style="left:1672px;top:150px;width:92px;height:24px;border-radius:3px">
<svg style="left:9px;top:5px" width="14" height="14" viewBox="0 0 14 14"><path d="M5 10.2V8.9Q2.4 7.4 2.4 5A4.6 4.6 0 0 1 11.6 5Q11.6 7.4 9 8.9V10.2Z" fill="none" stroke="#dcdcdc" stroke-width="1.1" stroke-linejoin="round"/><path d="M5 12.6H9" stroke="#dcdcdc" stroke-width="1.1"/></svg>
<span style="left:28px;top:2px;line-height:20px;color:#ededed">环境光</span>
<svg style="left:74px;top:5px" width="14" height="14" viewBox="0 0 14 14"><path d="M0.6 7Q3.4 2.6 7 2.6Q10.6 2.6 13.4 7Q10.6 11.4 7 11.4Q3.4 11.4 0.6 7Z" fill="none" stroke="#dcdcdc" stroke-width="1.1"/><circle cx="7" cy="7" r="2" fill="none" stroke="#dcdcdc" stroke-width="1.1"/></svg>
</div>
<div class="cb" style="left:1648px;top:184px"></div>
<div style="left:1672px;top:178px;width:92px;height:24px;border-radius:3px">
<svg style="left:9px;top:5px" width="14" height="14" viewBox="0 0 14 14"><path d="M5 10.2V8.9Q2.4 7.4 2.4 5A4.6 4.6 0 0 1 11.6 5Q11.6 7.4 9 8.9V10.2Z" fill="none" stroke="#dcdcdc" stroke-width="1.1" stroke-linejoin="round"/><path d="M5 12.6H9" stroke="#dcdcdc" stroke-width="1.1"/></svg>
<span style="left:28px;top:2px;line-height:20px;color:#ededed">平行光</span>
<svg style="left:74px;top:5px" width="14" height="14" viewBox="0 0 14 14"><path d="M0.6 7Q3.4 2.6 7 2.6Q10.6 2.6 13.4 7Q10.6 11.4 7 11.4Q3.4 11.4 0.6 7Z" fill="none" stroke="#dcdcdc" stroke-width="1.1"/><circle cx="7" cy="7" r="2" fill="none" stroke="#dcdcdc" stroke-width="1.1"/></svg>
</div>
<div class="cb" style="left:1648px;top:212px"></div>
<div style="left:1672px;top:206px;width:92px;height:24px;background:#111b2e;border-radius:3px">
<svg style="left:9px;top:5px" width="14" height="14" viewBox="0 0 14 14"><path d="M7 0.9L12.7 4.1V9.9L7 13.1L1.3 9.9V4.1Z" fill="none" stroke="#dcdcdc" stroke-width="1.2" stroke-linejoin="round"/><path d="M1.6 4.3L5.2 6.2M12.4 4.3L8.8 6.2M7 13V9.2M4.2 2.6L7 4.3L9.8 2.6M1.4 8L4.2 9.6V11.4M12.6 8L9.8 9.6V11.4" fill="none" stroke="#dcdcdc" stroke-width="1.1"/></svg>
<span style="left:28px;top:2px;line-height:20px;color:#ededed">正方体</span>
<svg style="left:74px;top:5px" width="14" height="14" viewBox="0 0 14 14"><path d="M0.6 7Q3.4 2.6 7 2.6Q10.6 2.6 13.4 7Q10.6 11.4 7 11.4Q3.4 11.4 0.6 7Z" fill="none" stroke="#dcdcdc" stroke-width="1.1"/><circle cx="7" cy="7" r="2" fill="none" stroke="#dcdcdc" stroke-width="1.1"/></svg>
</div>
<div style="left:1600px;top:437px;width:320px;height:1px;background:#303030"></div>
<div class="tab on" style="left:1600px;top:398px">属性</div>
<div class="tab " style="left:1664px;top:398px">脚本</div>
<div style="left:1600px;top:446px;width:320px;height:479px;background:#000"></div>
<div style="left:1918px;top:446px;width:2px;height:479px;background:#3c3c3c"></div>
<div style="left:1918px;top:446px;width:2px;height:446px;background:#b0b0b0"></div>
<svg style="left:1616px;top:463px" width="12" height="12" viewBox="0 0 12 12"><path d="M1.2 2.9L6 9.1L10.8 2.9" fill="none" stroke="#dcdcdc" stroke-width="1.2"/></svg>
<span class="t" style="left:1640px;top:459px">基本信息</span>
<span class="t" style="left:1620px;top:510px">名称:</span>
<div class="inp" style="top:504px"><span style="color:#ededed">正方体</span></div>
<span class="t" style="left:1620px;top:566px">类型:</span>
<div class="inp" style="top:560px"><span class="n" style="color:#4a4a4a">Mesh</span></div>
<span class="t" style="left:1620px;top:622px">可见性:</span>
<div style="left:1675px;top:624px;width:16px;height:16px;background:#1668dc;border-radius:3px"><svg style="left:3px;top:3px" width="10" height="10" viewBox="0 0 10 10"><path d="M1.5 5.2L4 7.6L8.6 2.6" stroke="#fff" stroke-width="1.8" fill="none"/></svg></div>
<svg style="left:1615px;top:700px" width="12" height="12" viewBox="0 0 12 12"><path d="M2.9 1.2L9.1 6L2.9 10.8" fill="none" stroke="#dcdcdc" stroke-width="1.2"/></svg>
<span class="t" style="left:1640px;top:696px">位置</span>
<svg style="left:1615px;top:746px" width="12" height="12" viewBox="0 0 12 12"><path d="M2.9 1.2L9.1 6L2.9 10.8" fill="none" stroke="#dcdcdc" stroke-width="1.2"/></svg>
<span class="t" style="left:1640px;top:742px">网格</span>
<svg style="left:1615px;top:792px" width="12" height="12" viewBox="0 0 12 12"><path d="M2.9 1.2L9.1 6L2.9 10.8" fill="none" stroke="#dcdcdc" stroke-width="1.2"/></svg>
<span class="t n" style="left:1640px;top:788px">BufferGeometry</span>
<svg style="left:1615px;top:838px" width="12" height="12" viewBox="0 0 12 12"><path d="M2.9 1.2L9.1 6L2.9 10.8" fill="none" stroke="#dcdcdc" stroke-width="1.2"/></svg>
<span class="t" style="left:1640px;top:834px">正方体</span>
<svg style="left:1615px;top:884px" width="12" height="12" viewBox="0 0 12 12"><path d="M2.9 1.2L9.1 6L2.9 10.8" fill="none" stroke="#dcdcdc" stroke-width="1.2"/></svg>
<span class="t" style="left:1640px;top:880px">材质</span>
<div style="left:0;top:925px;width:1920px;height:40px;background:#141414;border-top:1px solid #2a2a2a"></div>
<span class="st n" style="left:25px">r166</span>
<span class="st n" style="left:85px">X</span>
<span class="st n" style="left:103px">1171</span>
<span class="st n" style="left:150px">Y</span>
<span class="st n" style="left:166px">830</span>
<span class="st" style="left:231px">物体</span>
<span class="st n" style="left:267px">3</span>
<span class="st" style="left:315px">顶点</span>
<span class="st n" style="left:351px">108</span>
<span class="st" style="left:399px">三角形</span>
<span class="st n" style="left:449px">36</span>
<span class="st" style="left:514px">自动保存</span>
<span class="st" style="left:643px">物理引擎</span>
<span class="st" style="left:772px">数据可视化</span>
<span class="st" style="left:898px">虚拟现实</span>
<div class="sep" style="left:69px;top:939px;height:13px"></div>
<div class="sep" style="left:214px;top:939px;height:13px"></div>
<div class="sep" style="left:497px;top:939px;height:13px"></div>
<div class="sep" style="left:626px;top:939px;height:13px"></div>
<div class="sep" style="left:755px;top:939px;height:13px"></div>
<div class="sep" style="left:1024px;top:939px;height:13px"></div>
<div class="sep" style="left:1257px;top:939px;height:13px"></div>
<div class="cb" style="left:578px;top:938px"></div>
<div class="cb" style="left:707px;top:938px"></div>
<div class="cb" style="left:850px;top:938px"></div>
<div class="cb" style="left:962px;top:938px"></div>
<svg style="left:1002px;top:939px" width="14" height="14" viewBox="0 0 14 14"><path d="M13.38 7.49L13.08 8.99L11.46 9.26L10.79 10.26L11.17 11.86L9.89 12.71L8.56 11.75L7.38 11.99L6.51 13.38L5.01 13.08L4.74 11.46L3.74 10.79L2.14 11.17L1.29 9.89L2.25 8.56L2.01 7.38L0.62 6.51L0.92 5.01L2.54 4.74L3.21 3.74L2.83 2.14L4.11 1.29L5.44 2.25L6.62 2.01L7.49 0.62L8.99 0.92L9.26 2.54L10.26 3.21L11.86 2.83L12.71 4.11L11.75 5.44L11.99 6.62Z" fill="none" stroke="#dcdcdc" stroke-width="1.1" stroke-linejoin="round"/><circle cx="7" cy="7" r="2" fill="none" stroke="#dcdcdc" stroke-width="1.1"/></svg>
<div style="left:1033px;top:934px;width:100px;height:24px;background:#1668dc;border-radius:2px;text-align:center;line-height:24px;color:#fff">设为默认视角</div>
<div style="left:1149px;top:934px;width:100px;height:24px;background:#141414;border:1px solid #424242;border-radius:2px;text-align:center;line-height:22px;color:#ededed">重置初始视角</div>
</body></html>
